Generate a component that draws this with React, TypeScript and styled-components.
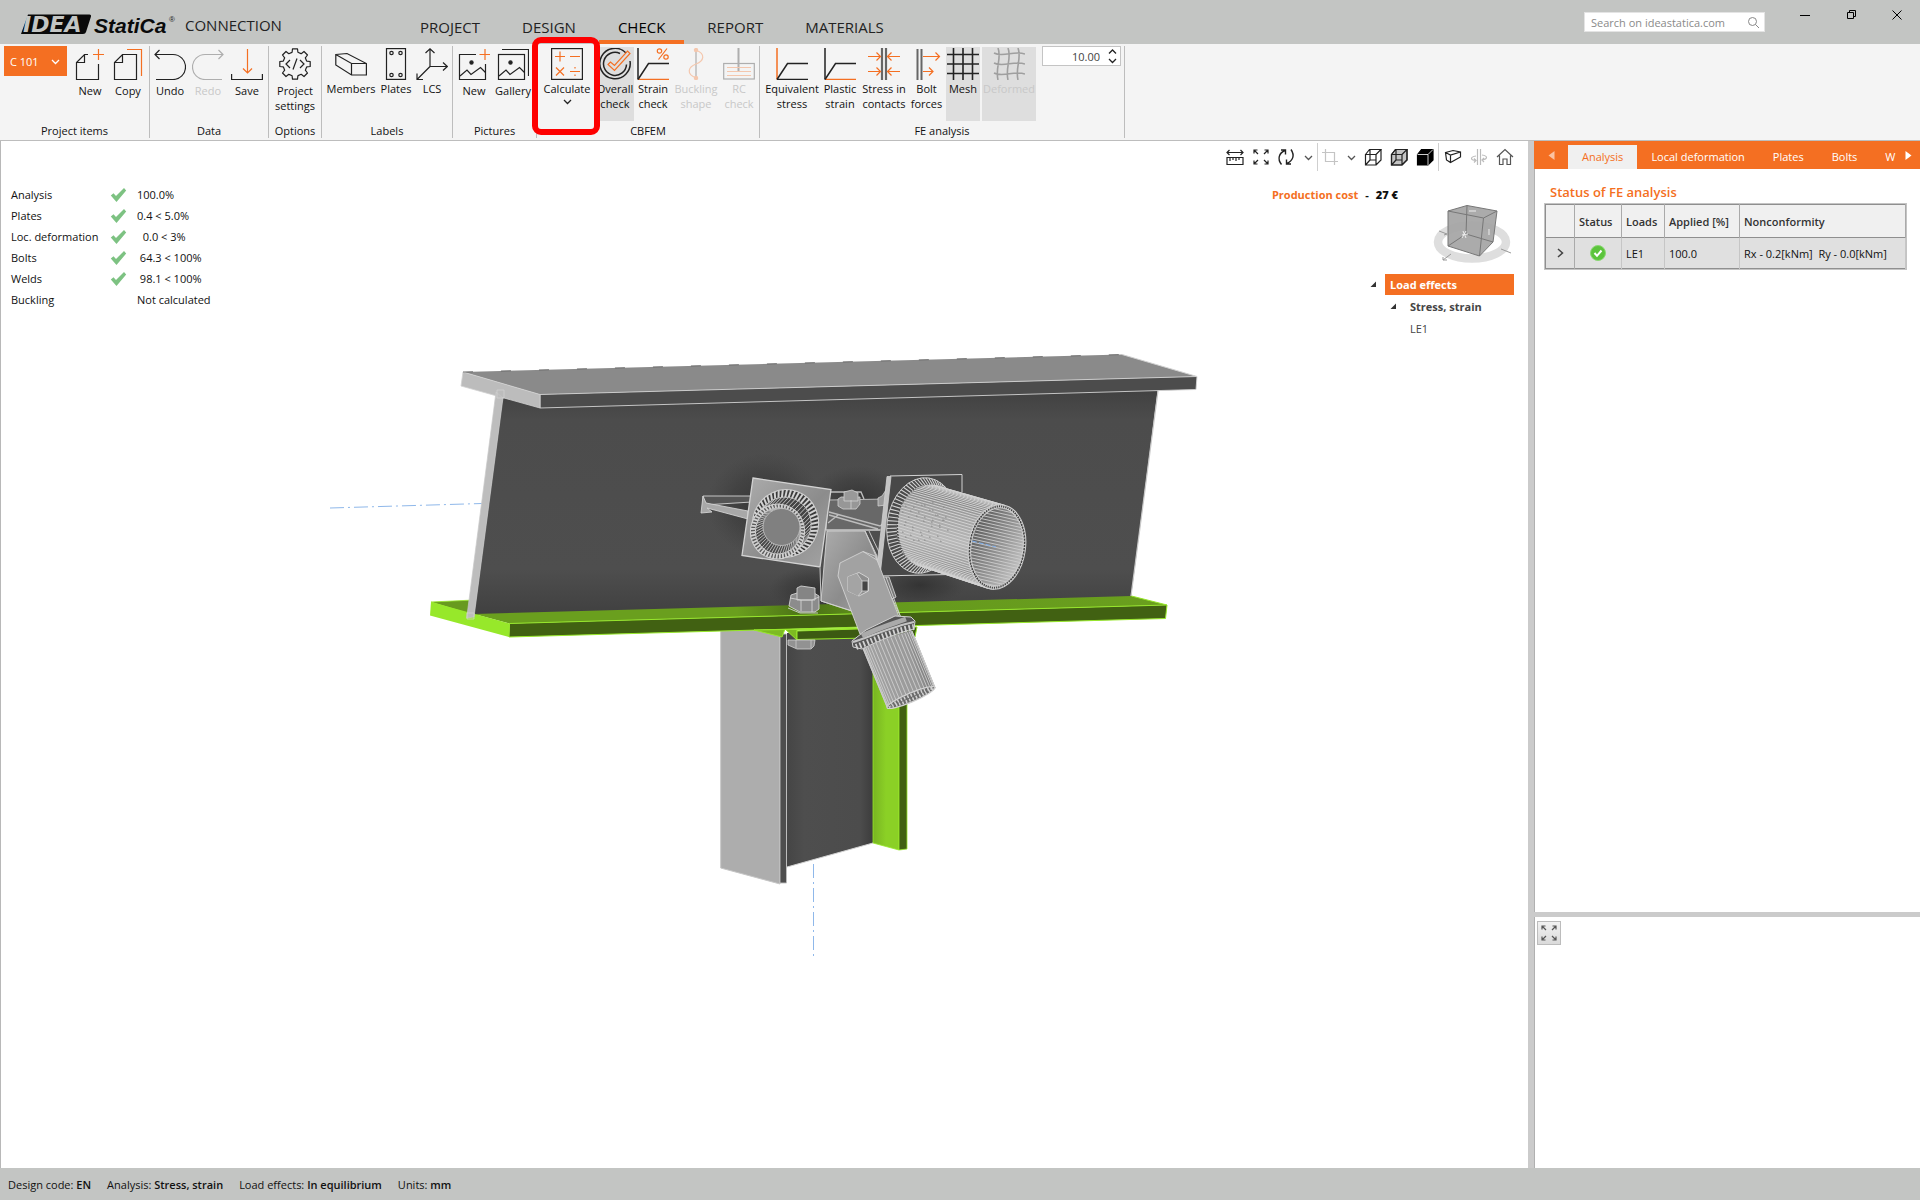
import React from "react";
import styled, { createGlobalStyle, css } from "styled-components";

const ORANGE = "#f46f22";
const INK = "#222";

const GlobalStyle = createGlobalStyle`
  * { box-sizing: border-box; }
  body { margin: 0; background: #fff; }
  button, input, select { font: inherit; color: inherit; border: 0; background: none; padding: 0; margin: 0; }
  svg { display: block; flex: none; }
`;

/* ---------- shell ---------- */
const Shell = styled.div`
  display: grid;
  grid-template-rows: 44px 97px minmax(0, 1fr) 32px;
  height: 100vh;
  font: 11px/15px "Open Sans", "Noto Sans", sans-serif;
  color: #111;
`;

const TitleBar = styled.header`
  display: flex;
  align-items: stretch;
  background: #c3c5c3;
`;
const Brand = styled.div`
  display: flex;
  align-items: center;
  width: 401px;
  padding: 6px 0 0 20px;
  gap: 8px;
  font-size: 15px;
  color: #222;
`;
const Tabs = styled.nav`
  display: flex;
  gap: 4px;
`;
const Tab = styled.a<{ $active?: boolean }>`
  display: flex;
  align-items: center;
  padding: 16px 19px 2px;
  border-bottom: 4px solid ${(p) => (p.$active ? ORANGE : "transparent")};
  color: ${(p) => (p.$active ? "#000" : "#222")};
  font-size: 15px;
  text-decoration: none;
`;
const TitleTools = styled.div`
  display: flex;
  align-items: flex-start;
  margin-left: auto;
`;
const Search = styled.label`
  display: flex;
  align-items: center;
  width: 181px;
  height: 20px;
  margin: 12px 17px 0 0;
  padding: 0 4px 0 6px;
  background: #fff;
  border: 1px solid #e4e4e4;
  input { flex: 1; min-width: 0; outline: 0; }
  input::placeholder { color: #8a8a8a; opacity: 1; }
`;
const WindowButton = styled.button`
  display: flex;
  justify-content: center;
  width: 46px;
  padding-top: 9px;
`;

/* ---------- ribbon ---------- */
const Ribbon = styled.div`
  display: flex;
  background: #f4f4f4;
  border-bottom: 1px solid #bdbdbd;
`;
const GroupBox = styled.section<{ $width: number; $pad: number }>`
  position: relative;
  display: flex;
  flex-direction: column;
  width: ${(p) => p.$width}px;
  margin: 2px 0;
  padding-left: ${(p) => p.$pad}px;
  border-right: 1px solid #bdbdbd;
`;
const GroupTools = styled.div`
  display: flex;
  flex: 1;
  align-items: flex-start;
`;
const GroupTitle = styled.h2<{ $pad: number }>`
  margin: 0 0 0 -${(p) => p.$pad}px;
  font: inherit;
  text-align: center;
`;
const Tool = styled.button<{ $width: number; $on?: boolean; $low?: boolean; $gap?: number }>`
  display: flex;
  flex-direction: column;
  align-items: center;
  width: ${(p) => p.$width}px;
  height: 74px;
  margin: 1px ${(p) => p.$gap ?? 0}px 0 0;
  padding-top: 1px;
  gap: ${(p) => (p.$low ? 3 : 1)}px;
  white-space: pre;
  text-align: center;
  background: ${(p) => (p.$on ? "#dedede" : "transparent")};
  &:disabled { color: #c8c8c8; }
  &:disabled svg { opacity: 0.33; }
`;
const ItemPicker = styled.div`
  position: relative;
  width: 63px;
  margin-right: 5px;
  select {
    appearance: none;
    width: 63px;
    height: 30px;
    padding-left: 6px;
    background: ${ORANGE};
    color: #fff;
    border-radius: 0;
  }
  svg { position: absolute; right: 7px; top: 11px; pointer-events: none; }
`;
const Spinner = styled.div`
  display: flex;
  width: 79px;
  height: 20px;
  margin-left: 6px;
  background: #fff;
  border: 1px solid #c4c4c4;
  input { flex: 1; min-width: 0; text-align: right; color: #444; outline: 0; }
`;
const SpinButtons = styled.div`
  display: flex;
  flex-direction: column;
  width: 20px;
  button { display: flex; flex: 1; align-items: center; justify-content: center; padding-left: 4px; }
`;
const Highlight = styled.div`
  position: absolute;
  left: -5px;
  top: -9px;
  width: 68px;
  height: 98px;
  border: 6px solid #fe0000;
  border-radius: 9px;
  pointer-events: none;
  z-index: 2;
`;

/* ---------- work area ---------- */
const Work = styled.div`
  display: grid;
  grid-template-columns: minmax(0, 1fr) 386px;
  column-gap: 6px;
  min-height: 0;
  background: #cbcbcb;
`;
const Viewport = styled.main`
  display: grid;
  min-height: 0;
  background: #fff;
  border-left: 1px solid #b8b8b8;
  > * { grid-area: 1 / 1; min-height: 0; }
`;
const Scene = styled.svg`
  width: 100%;
  height: 100%;
`;
const Hud = styled.div`
  display: flex;
  align-items: flex-start;
  justify-content: space-between;
  z-index: 1;
`;
const Results = styled.dl`
  display: grid;
  grid-template-columns: 99px 27px auto;
  grid-auto-rows: 21px;
  align-items: center;
  margin: 43px 0 0 10px;
  dt, dd { margin: 0; white-space: pre; }
  dd { grid-column: 3; }
`;
const HudSide = styled.div`
  display: flex;
  flex-direction: column;
  align-items: flex-end;
  padding-right: 10px;
`;
const ViewTools = styled.div`
  display: flex;
  align-items: center;
  height: 32px;
`;
const ViewTool = styled.button<{ $width: number }>`
  display: flex;
  justify-content: center;
  width: ${(p) => p.$width}px;
`;
const Rule = styled.span`
  width: 1px;
  height: 28px;
  background: #cfcfcf;
`;
const Cost = styled.p`
  display: flex;
  gap: 7px;
  margin: 14px 120px 0 0;
  font-weight: 700;
  span { color: ${ORANGE}; }
`;
const CubeWrap = styled.div`
  margin: 2px 6px 9px 0;
`;
const Tree = styled.ul`
  width: 144px;
  margin: 0 4px 0 0;
  padding: 0;
  list-style: none;
`;
const TreeRow = styled.li<{ $level: number; $strong?: boolean; $selected?: boolean }>`
  display: flex;
  align-items: center;
  gap: 8px;
  height: 22px;
  padding-left: ${(p) => p.$level * 20}px;
  font-weight: ${(p) => (p.$strong ? 700 : 400)};
  color: #444;
  span {
    flex: 1;
    padding-left: 5px;
    line-height: 21px;
    ${(p) => p.$selected && css`background: ${ORANGE}; color: #fff;`}
  }
`;

/* ---------- side panels ---------- */
const Side = styled.aside`
  display: grid;
  grid-template-rows: minmax(0, 1fr) 251px;
  row-gap: 5px;
  min-height: 0;
`;
const Panel = styled.section`
  background: #fff;
  border-left: 1px solid #b0b0b0;
  min-height: 0;
`;
const PanelTabs = styled.div`
  display: flex;
  align-items: flex-end;
  height: 28px;
  margin-left: -1px;
  background: ${ORANGE};
  color: #fff;
`;
const PanelTab = styled.button<{ $active?: boolean; $last?: boolean }>`
  height: 24px;
  padding: 0 ${(p) => (p.$last ? 0 : 14)}px 2px 14px;
  white-space: nowrap;
  ${(p) => p.$active && css`background: #f0f0f0; color: ${ORANGE};`}
`;
const Pager = styled.button<{ $width: number; $end?: boolean }>`
  display: flex;
  align-items: center;
  justify-content: center;
  width: ${(p) => p.$width}px;
  height: 28px;
  margin-left: ${(p) => (p.$end ? "auto" : 0)};
`;
const PanelTitle = styled.h3`
  margin: 14px 0 3px 15px;
  font-size: 13px;
  line-height: 18px;
  font-weight: 600;
  color: ${ORANGE};
`;
const StatusTable = styled.table`
  width: 361px;
  margin-left: 10px;
  border-collapse: collapse;
  border: 1px solid #8f8f8f;
  outline: 1px solid #c4c4c4;
  white-space: pre;
  th, td { padding: 0 0 0 4px; text-align: left; border-right: 1px solid #aaa; }
  th { height: 33px; background: #f0f0f0; font-weight: 600; color: #333; }
  td { height: 31px; background: #e0e0e0; border-top: 1px solid #8f8f8f; }
  td + td { border-color: #8f8f8f #c6c6c6; }
  svg { margin: 0 auto; }
  td:nth-child(-n + 2) { padding: 0; }
`;
const ExpandButton = styled.button`
  display: flex;
  align-items: center;
  justify-content: center;
  width: 24px;
  height: 24px;
  margin: 4px 0 0 2px;
  background: linear-gradient(#f2f2f2, #dadada);
  border: 1px solid #bcbcbc;
`;
const StatusBar = styled.footer`
  display: flex;
  align-items: center;
  gap: 16px;
  padding: 0 8px;
  background: #c3c5c3;
  b { font-weight: 600; color: #111; }
`;

/* ---------- icons ---------- */
const Icon = ({ size = 32, children, sw = 1.2, color = INK }: { size?: number; sw?: number; color?: string; children: React.ReactNode }) => (
  <svg width={size} height={size} viewBox={`0 0 ${size} ${size}`} fill="none" stroke={color} strokeWidth={sw}>
    {children}
  </svg>
);
const Chevron = ({ color = INK, up = false }: { color?: string; up?: boolean }) => (
  <svg width="9" height="9" viewBox="0 0 9 9" fill="none" stroke={color} strokeWidth="1.3">
    <path d={up ? "M1 6.5 4.5 3 8 6.5" : "M1 3 4.5 6.5 8 3"} />
  </svg>
);
const O = { stroke: ORANGE };

const NewIcon = () => (
  <Icon><path d="M14 6.5H10.500L2.500 14.500V31.500H24.500V16M10.500 6.500V14.500H2.500" /><path {...O} d="M24.500 1v11M19 6.500h11" /></Icon>
);
const CopyIcon = () => (
  <Icon><path d="M10.500 6.500H24.500V31.500H2.500V14.500ZM10.500 6.500V14.500H2.500" /><path {...O} d="M15 1.500H29.500V28" /></Icon>
);
const UndoIcon = () => (
  <Icon><path d="M1 6.500H19a12.500 12.500 0 0 1 0 25H2M5.500 2 1 6.500 5.500 11" /></Icon>
);
const RedoIcon = () => (
  <Icon><path d="M31 6.500H13a12.500 12.500 0 0 0 0 25H30M26.500 2 31 6.500 26.500 11" /></Icon>
);
const SaveIcon = () => (
  <Icon><path d="M.600 26V31.500H31.400V26" /><path {...O} d="M16.500 1V25M12 20.500 16.500 25 21 20.500" /></Icon>
);
const gearPath = (() => {
  let d = "";
  for (let i = 0; i < 8; i++) {
    const base = (i * Math.PI) / 4 - Math.PI / 2;
    [[-0.24, 12], [-0.16, 15.4], [0.16, 15.4], [0.24, 12], [0.52, 12]].forEach(([a, r], k) => {
      d += `${i === 0 && k === 0 ? "M" : "L"}${(16 + r * Math.cos(base + a)).toFixed(1)} ${(16 + r * Math.sin(base + a)).toFixed(1)}`;
    });
  }
  return d + "Z";
})();
const GearIcon = () => (
  <Icon><path d={gearPath} strokeLinejoin="round" /><path d="M11 12 7 16l4 4M21 12l4 4-4 4M18 10.500 14 21.500" /></Icon>
);
const MembersIcon = () => (
  <Icon><path d="M.800 6.500 12 5.500 31.400 15.500V27H16.500L.800 17ZM.800 6.500 16.500 15.500H31.400M16.500 15.500V27" /></Icon>
);
const PlatesIcon = () => (
  <Icon>
    <rect x="6.500" y=".600" width="19" height="30.800" />
    {[[11.500, 5], [20.500, 5], [11.500, 27], [20.500, 27]].map(([x, y]) => <circle key={`${x}-${y}`} cx={x} cy={y} r="1.700" />)}
  </Icon>
);
const LcsIcon = () => (
  <Icon><path d="M14 1V18.500H31M14 18.500 1 31.500M9.500 5 14 .800 18.500 5M27 14.500 31.300 18.500 27 22.500M1 25.500V31.500H7" /></Icon>
);
const Landscape = () => (
  <><circle cx="13.500" cy="14.500" r="1.600" fill={INK} /><path d="M2 28 9 22l4 4.500L22.500 19.500 27.500 24.500" /></>
);
const PictureIcon = () => (
  <Icon><path d="M18 6.500H1.500V31.500H27.500V16" /><Landscape /><path {...O} d="M27 1v11M21.500 6.500h11" /></Icon>
);
const GalleryIcon = () => (
  <Icon><rect x="1.500" y="6.500" width="26" height="25" /><path d="M5 1.500H31.500V28" /><Landscape /></Icon>
);
const CalculateIcon = () => (
  <Icon><rect x=".600" y=".600" width="30.800" height="30.800" /><path {...O} d="M4 8.500h10M9 3.500v10M19 8.500h10M5 19.500l8 8M13 19.500l-8 8M19 23.500h10M24 19v1.600M24 26.500v1.600" /></Icon>
);
const OverallIcon = () => (
  <Icon>
    <path d="M27 5A15.200 15.200 0 1 0 31 13M21 5.500A11.500 11.500 0 1 0 27.500 16.500" strokeWidth="1.500" />
    <path {...O} d="M9 16.500 11.500 14 15.500 17.500 28.500 3 31 5.500 15.500 22.500Z" />
  </Icon>
);
const Axes = ({ left, bottom }: { left: string; bottom: string }) => (
  <><path stroke={left} strokeWidth="1.500" d="M1 0V31.500" /><path stroke={bottom} strokeWidth="1.500" d="M1 31.500H32" /><path d="M1 31.500 11.500 15.500H32" strokeWidth="1.500" /></>
);
const StrainIcon = () => (
  <Icon>
    <Axes left={INK} bottom={ORANGE} />
    <g {...O}><circle cx="22.500" cy="3" r="2.200" /><circle cx="29" cy="9" r="2.200" /><path d="M30 .500 21.500 11.500" /></g>
  </Icon>
);
const BucklingIcon = () => (
  <Icon>
    <path d="M16 2V30" /><path {...O} d="M16 2C26 6 24 13 16 16S6 26 16 30" />
    <circle cx="16" cy="2" r="1.600" fill={ORANGE} {...O} /><circle cx="16" cy="30" r="1.600" fill={ORANGE} {...O} />
  </Icon>
);
const RcIcon = () => (
  <Icon><rect x=".700" y="15.500" width="30.600" height="15.500" /><path d="M15.500 0V24" strokeWidth="2" /><path {...O} d="M4 19.500H28M4 23.500H28M4 27.500H28" /></Icon>
);
const ContactsIcon = () => (
  <Icon>
    <path d="M14 0V32M18 0V32" stroke="#666" strokeWidth="2.200" />
    <path {...O} d="M0 8.500H12.500M8.500 4.500l4 4-4 4M32 8.500H19.500M23.500 4.500l-4 4 4 4M0 23.500H12.500M8.500 19.500l4 4-4 4M32 23.500H19.500M23.500 19.500l-4 4 4 4" />
  </Icon>
);
const BoltForcesIcon = () => (
  <Icon>
    <path d="M6.500 1V32M10.500 1V32" stroke="#666" strokeWidth="2" />
    <path {...O} d="M12 8.500H28.500M24.500 4.500l4 4-4 4M12 23.500H22M18 19.500l4 4-4 4" />
  </Icon>
);
const MeshIcon = () => <Icon sw={1.6}><path d="M6.500 0V32M16 0V32M25.500 0V32M0 6.500H32M0 16H32M0 25.500H32" /></Icon>;
const DeformedIcon = () => (
  <Icon sw={1.6}><path d="M5 0C9 10 2 20 5 32M15 0c4 10-3 20 0 32M25 0c4 10-3 20 0 32M1 5c9 5 20-3 31 1M1 15c9 5 20-3 31 1M1 25c9 5 20-3 31 1" /></Icon>
);

const wireCube = "M1.500 6.500H12V17H1.500ZM1.500 6.500 5.500 1.500H17L12 6.500M17 1.500V12L12 17M6 1.500V12M6 12 1.500 17M6 12H12";
const solidCube = "M1.500 6.500 5.500 1.500H17V12L12 17H1.500Z";
const Arrows4 = () => (
  <path d="M6 6 2 2M2 5.500V2H5.500M12 6 16 2M12.500 2H16V5.500M6 12 2 16M2 12.500V16H5.500M12 12 16 16M12.500 16H16V12.500" />
);

const Check = () => (
  <svg width="17" height="16" viewBox="0 0 17 16"><path d="M.800 8.500 3.500 6.200 6 9 14 1 16.200 3.500 6.500 15Z" fill="#7dc282" /></svg>
);

const Tri = () => (
  <svg width="7" height="7" viewBox="0 0 7 7"><path d="M6 .500V6H.500Z" fill="#333" /></svg>
);

/* ---------- 3D scene ---------- */
type Oval = { cx: number; cy: number; rx: number; ry: number; rot: number };
const at = (o: Oval, a: number) => {
  const r = (o.rot * Math.PI) / 180;
  const x = o.rx * Math.cos(a);
  const y = o.ry * Math.sin(a);
  return [o.cx + x * Math.cos(r) - y * Math.sin(r), o.cy + x * Math.sin(r) + y * Math.cos(r)];
};
const spokes = (a: Oval, b: Oval, n: number) => {
  let d = "";
  for (let i = 0; i < n; i++) {
    const t = (i / n) * Math.PI * 2;
    const [x1, y1] = at(a, t);
    const [x2, y2] = at(b, t);
    d += `M${x1.toFixed(1)} ${y1.toFixed(1)}L${x2.toFixed(1)} ${y2.toFixed(1)}`;
  }
  return d;
};
const Ellipse = ({ o, ...rest }: { o: Oval } & React.SVGProps<SVGEllipseElement>) => (
  <ellipse cx={o.cx} cy={o.cy} rx={o.rx} ry={o.ry} transform={`rotate(${o.rot} ${o.cx} ${o.cy})`} {...rest} />
);

const WIRE = "#d2d2d2";
const LIME = "#97e82a";
const flareOut: Oval = { cx: 922, cy: 525.5, rx: 35, ry: 48, rot: 8 };
const flareIn: Oval = { cx: 927, cy: 525.5, rx: 30, ry: 41, rot: 8 };
const mouth: Oval = { cx: 997, cy: 547, rx: 28.5, ry: 42.5, rot: 8 };
const mouthIn: Oval = { cx: 997, cy: 547, rx: 26, ry: 39.5, rot: 8 };
const ringBack: Oval = { cx: 785.5, cy: 523.5, rx: 33, ry: 34, rot: 20 };
const ringBackIn: Oval = { cx: 784, cy: 525, rx: 27, ry: 28, rot: 20 };
const ringFront: Oval = { cx: 777.5, cy: 531.5, rx: 27, ry: 27.5, rot: 20 };
const ringHole: Oval = { cx: 778, cy: 531, rx: 22.5, ry: 23, rot: 20 };
const holeFloor: Oval = { cx: 781.5, cy: 527, rx: 18.5, ry: 18.5, rot: 20 };

const tubeBody = (() => {
  let d = "";
  const n = 46;
  for (let i = 0; i <= n; i++) {
    const t = Math.PI * (0.47 + (1.06 * i) / n);
    const [x1, y1] = at(flareIn, t);
    const [x2, y2] = at(mouth, t);
    d += `M${x1.toFixed(1)} ${y1.toFixed(1)}L${x2.toFixed(1)} ${y2.toFixed(1)}`;
  }
  return d;
})();
const tubeInterior = (() => {
  let d = "";
  for (let i = -16; i < 20; i++) d += `M955 ${(535 + i * 3.2).toFixed(1)}L1030 ${(552 + i * 3.2).toFixed(1)}`;
  return d;
})();
const lowerTube = (() => {
  let d = "";
  for (let i = 0; i <= 20; i++) {
    const t = (1 - Math.cos((i / 20) * Math.PI)) / 2;
    const bulge = Math.sin((i / 20) * Math.PI) * 5;
    d += `M${(862 + 50 * t).toFixed(1)} ${(646 - 15 * t).toFixed(1)}L${(887 + 48 * t + bulge * 0.3).toFixed(1)} ${(707 - 19.5 * t + bulge * 0.5).toFixed(1)}`;
  }
  return d;
})();
const specks = (() => {
  let d = "";
  for (let i = 0; i < 44; i++) {
    const x = 902 + ((i * 29 + (i * i) % 7) % 46);
    const y = 502 + ((i * 17 + (i * i) % 5) % 40);
    d += `M${x} ${y}l1.500 .400`;
  }
  return d;
})();

const Model = () => (
  <Scene viewBox="1 141 1527 1027" preserveAspectRatio="xMidYMid meet" role="img" aria-label="Steel connection model">
    <defs>
      <linearGradient id="web" x1="0" y1="0" x2="0" y2="1">
        <stop offset="0" stopColor="#404040" /><stop offset=".14" stopColor="#4c4c4c" /><stop offset=".8" stopColor="#4e4e4e" /><stop offset="1" stopColor="#404040" />
      </linearGradient>
      <radialGradient id="shade"><stop offset="0" stopColor="#2a2a2a" stopOpacity=".7" /><stop offset=".6" stopColor="#303030" stopOpacity=".35" /><stop offset="1" stopColor="#383838" stopOpacity="0" /></radialGradient>
      <linearGradient id="colWeb" x1="0" y1="0" x2="1" y2="0">
        <stop offset="0" stopColor="#454545" /><stop offset=".2" stopColor="#4e4e4e" /><stop offset=".85" stopColor="#4c4c4c" /><stop offset="1" stopColor="#3c3c3c" />
      </linearGradient>
      <linearGradient id="colGreen" x1="0" y1="0" x2="1" y2="0"><stop offset="0" stopColor="#78b422" /><stop offset=".5" stopColor="#8bd026" /></linearGradient>
      <linearGradient id="plate" x1="0" y1="0" x2="1" y2="1"><stop offset="0" stopColor="#adadad" /><stop offset=".55" stopColor="#8c8c8c" /><stop offset="1" stopColor="#a4a4a4" /></linearGradient>
      <linearGradient id="tube" x1=".4" y1="0" x2=".2" y2="1"><stop offset="0" stopColor="#6a6a6a" /><stop offset=".25" stopColor="#a2a2a2" /><stop offset=".5" stopColor="#b8b8b8" /><stop offset=".7" stopColor="#9c9c9c" /><stop offset="1" stopColor="#505050" /></linearGradient>
      <linearGradient id="bore" x1="0" y1="0" x2="1" y2=".6"><stop offset="0" stopColor="#4c4c4c" /><stop offset=".5" stopColor="#858585" /><stop offset="1" stopColor="#bcbcbc" /></linearGradient>
      <linearGradient id="lower" x1="0" y1=".3" x2="1" y2="0"><stop offset="0" stopColor="#a2a2a2" /><stop offset=".6" stopColor="#999" /><stop offset="1" stopColor="#484848" /></linearGradient>
      <linearGradient id="green" x1="0" y1="0" x2="1" y2="0"><stop offset="0" stopColor="#6a9f1e" /><stop offset=".38" stopColor="#6a9f1e" /><stop offset=".48" stopColor="#4a7015" /><stop offset=".58" stopColor="#65991d" /><stop offset="1" stopColor="#6a9f1e" /></linearGradient>
      <clipPath id="mouthClip"><Ellipse o={mouthIn} /></clipPath>
    </defs>

    {/* system lines */}
    <path d="M330 508 482 503.500M813.500 864V957" stroke="#8fb8ea" strokeDasharray="14 4 2 4" />

    {/* column */}
    <path d="M787 633H873V843L787 867Z" fill="url(#colWeb)" />
    <path d="M873 633H899V850L873 843Z" fill="url(#colGreen)" stroke={LIME} strokeWidth=".800" />
    <path d="M899 633H907V849L899 850Z" fill="#416112" stroke={LIME} strokeWidth=".800" />
    <path d="M720.700 630H780V884L720.700 868Z" fill="#adadad" stroke="#c6c6c6" />
    <path d="M780 634H786.500V883H780Z" fill="#4e4e4e" stroke="#c0c0c0" strokeWidth=".900" />
    <path d="M787 867 873 843" stroke={WIRE} />

    {/* beam web */}
    <path d="M503 396 1158 388 1131 597 474 615Z" fill="url(#web)" />
    <path d="M1158 391 1131 596" stroke="#c8c8c8" strokeWidth="1.200" />
    <ellipse cx="765" cy="505" rx="58" ry="52" fill="url(#shade)" />
    <ellipse cx="858" cy="500" rx="50" ry="34" fill="url(#shade)" />
    <ellipse cx="815" cy="590" rx="46" ry="24" fill="url(#shade)" />
    <ellipse cx="920" cy="585" rx="46" ry="20" fill="url(#shade)" />

    {/* top flange */}
    <path d="M463 372 1122 354.500 1197 376.500 540 394.500Z" fill="#8a8a8a" />
    <path d="M540 394.500 1197 376.500 1196 389.500 540 408Z" fill="#4c4c4c" stroke={WIRE} strokeWidth=".900" />
    <path d="M463 372 540 394.500V408L461 386Z" fill="#bcbcbc" stroke="#d2d2d2" strokeWidth=".800" />
    <path d="M1122 354.500 1197 376.500" stroke={WIRE} />
    <path d="M463 372 1122 354.500" stroke="#5c5c5c" strokeWidth=".800" strokeDasharray="10 28" />

    {/* bottom flange */}
    <path d="M431 602 474 600 470 614Z" fill="#689a1f" stroke={LIME} strokeWidth=".800" />
    <path d="M474 614 1131.500 596 1167 605 509.500 623.500Z" fill="url(#green)" />
    <path d="M1131.500 596 1167 605" stroke={LIME} />
    <path d="M509.500 623.500 1167 605 1165.500 618.500 509 637Z" fill="#416112" stroke={LIME} />
    <path d="M431 602 509.500 623.500 509 637 430 615.500Z" fill={LIME} />

    {/* beam web end */}
    <path d="M496 392 503 398 474 617 466.700 618Z" fill="#bdbdbd" stroke="#c9c9c9" strokeWidth=".700" />
    <path d="M497 390h7v8h-7ZM467 613h7v6h-7Z" fill="none" stroke="#d4d4d4" strokeWidth=".700" />

    {/* end plate and bolt below flange */}
    <path d="M754 630 782 637 785 629 797 640V630L860 628.500Z" fill="#7dbb22" stroke={LIME} />
    <path d="M797 631 917 627 915 637 797 639.500Z" fill="#3c5a12" stroke={LIME} />
    <path d="M788 640 815 640 814 646 811 649H797L788 645Z" fill="#929292" stroke={WIRE} strokeWidth=".800" />
    <path d="M796 640V648M811 640V648" stroke={WIRE} strokeWidth=".700" />

    {/* gusset to the left, bars between the plates */}
    <path d="M703 496H752V502L703 505Z" fill="#555" stroke={WIRE} strokeWidth=".900" />
    <path d="M703 496 701 513 712 512 707 508 748 519V511L706 503Z" fill="#a8a8a8" stroke={WIRE} strokeWidth=".900" />
    <path d="M828 500 888 499 882 530H826Z" fill="#686868" stroke={WIRE} strokeWidth=".800" />
    <path d="M831 492H861L864 499M829 512 880 526 888 520M829 515 878 529M826 530H880M828 523 838 515" fill="none" stroke="#bdbdbd" strokeWidth="1.400" />
    <path d="M838 499 841 497H860V504L856 509H843L838 506Z" fill="#979797" stroke={WIRE} strokeWidth=".800" />
    <path d="M844 492 852 490 858 493V501H844ZM851 500V509" fill="#999" stroke={WIRE} strokeWidth=".800" />
    <path d="M878 498 882 496 886 490V505L878 506Z" fill="#999" stroke={WIRE} strokeWidth=".800" />

    {/* vertical stiffener */}
    <path d="M827 531H865L877 556V580L870 617 821 601Z" fill="url(#plate)" stroke={WIRE} strokeWidth=".900" />
    <path d="M865 531 880 565M869 531 879 552M820 568 821 601 852 611" fill="none" stroke={WIRE} strokeWidth=".900" />
    <path d="M880 577 889 577 896 597 892 599ZM892 598 901 618" fill="#777" stroke={WIRE} strokeWidth=".900" />

    {/* left plate with tube seen end on */}
    <path d="M753 478 831 489.500 820 567 742 555.500Z" fill="url(#plate)" stroke={WIRE} strokeWidth="1.300" />
    <Ellipse o={ringBack} fill="#3a3a3a" stroke={WIRE} />
    <path d={spokes(ringBack, ringBackIn, 50)} stroke={WIRE} strokeWidth="2" />
    <Ellipse o={ringBackIn} fill="#444" stroke={WIRE} strokeWidth=".800" />
    <path d={spokes(ringBackIn, ringFront, 50)} stroke="#c4c4c4" strokeWidth="1" />
    <Ellipse o={ringFront} fill="#5a5a5a" stroke={WIRE} strokeWidth="1" />
    <path d={spokes(ringFront, ringHole, 50)} stroke={WIRE} strokeWidth="1.800" />
    <Ellipse o={ringHole} fill="#4a4a4a" stroke={WIRE} strokeWidth="1" />
    <path d={spokes(ringHole, holeFloor, 50)} stroke="#b8b8b8" strokeWidth="1" />
    <Ellipse o={holeFloor} fill="#808080" stroke="#c2c2c2" strokeWidth=".800" />

    {/* right plate with large tube */}
    <path d="M890 476 962 474.500V520L950 574.500 877 576Z" fill="#484848" />
    <path d="M962 492V474.500L890 476M877 576 950 574.500" fill="none" stroke={WIRE} />
    <path d="M887 476.500 891 476.500 880 576 876 575Z" fill="#c4c4c4" stroke={WIRE} strokeWidth=".800" />
    <Ellipse o={flareOut} fill="#4a4a4a" stroke={WIRE} strokeWidth=".900" />
    <path d={spokes(flareOut, flareIn, 76)} stroke={WIRE} strokeWidth="1.100" />
    <path d="M932 484.500 1003 504.500 991 589.500 921 566.500C906 562 898 546 898 525 898 503 912 483 932 484.500Z" fill="url(#tube)" />
    <path d={tubeBody} stroke={WIRE} strokeWidth="1" />
    <path d={specks} stroke="#8a8a8a" strokeWidth="1" />
    <Ellipse o={mouth} fill="#444" stroke={WIRE} />
    <path d={spokes(mouth, mouthIn, 80)} stroke={WIRE} strokeWidth="1" />
    <Ellipse o={mouthIn} fill="url(#bore)" stroke={WIRE} />
    <path d={tubeInterior} stroke="#cecece" strokeWidth=".900" clipPath="url(#mouthClip)" />
    <path d="M972 541 996 547" stroke="#7fb0ee" strokeDasharray="5 2" />

    {/* inclined connecting plate */}
    <path d="M840 563 863 551.500 877 560 899 617 860 634 838 576Z" fill="#a2a2a2" stroke={WIRE} strokeWidth=".900" />
    <path d="M863 551.500 875 556 877 560M886 577 901 618" fill="none" stroke={WIRE} strokeWidth=".900" />
    <path d="M847.500 577 859 572.500 868.500 578V591L859 596 848 591Z" fill="#8e8e8e" stroke={WIRE} strokeWidth="1" />
    <path d="M857 573.500 862 582V593L858 596 848 591 847.500 577Z" fill="#a4a4a4" />
    <path d="M862 581H868V591H862Z" fill="#454545" stroke={WIRE} strokeWidth=".800" />
    <path d="M857 573.500 862 581M862 591 858 596" stroke={WIRE} strokeWidth=".800" />

    {/* lower tube */}
    <path d="M861 645 912 630 935.500 688 887 708Z" fill="url(#lower)" />
    <path d={lowerTube} stroke="#cecece" strokeWidth=".900" />
    <path d="M852 641 866 630 895 616 911 617 915 621 914 629C900 632 880 640 862 649L853 647Z" fill="#555" stroke={WIRE} strokeWidth="1" />
    <path d="M853 642C865 639 890 627 914 622" fill="none" stroke="#c4c4c4" strokeWidth="2" />
    <path d="M856 647C872 641 890 632 914 627" fill="none" stroke={WIRE} strokeWidth="6" strokeDasharray="1.800 2.200" />
    <path d="M862 636C875 629 892 624 906 619" fill="none" stroke="#aaa" strokeWidth="5" />
    <g transform="rotate(-23 911 697.500)">
      <ellipse cx="911" cy="697.500" rx="26" ry="4.500" fill="#6a6a6a" stroke={WIRE} strokeWidth="1.300" />
      <ellipse cx="911" cy="697.500" rx="23" ry="2" fill="none" stroke={WIRE} strokeWidth="3" strokeDasharray="1.500 2" />
    </g>

    {/* bolt on flange */}
    <path d="M789 606 791 595 797 593H814L819 596V609L815 612 800 612Z" fill="#8c8c8c" stroke={WIRE} strokeWidth=".900" />
    <path d="M797 588 801 586 815 588V600H797Z" fill="#858585" stroke={WIRE} strokeWidth=".900" />
    <path d="M790 598 801 600 812 600 819 597M801 600V611M812 600V612M788 608 800 613H818" fill="none" stroke={WIRE} strokeWidth=".900" />
  </Scene>
);

const NavCube = () => (
  <svg width="80" height="60" viewBox="0 0 80 60" fill="none">
    <ellipse cx="40" cy="38" rx="34" ry="16.500" stroke="#dedede" strokeWidth="8.500" />
    <path d="M16 7 35 1.500 65 7 61 38 47.500 52 16 42Z" fill="#a4a4a4" fillOpacity=".92" stroke="#777" />
    <path d="M16 7 51.500 14 65 7M51.500 14 47.500 52M35 1.500 34 30 16 42M34 30 61 38" stroke="#777" />
    <path d="M37 7h7M57 25v6M31 27l3 7M34 27l-4 7M36 30l-6 1" stroke="#eee" />
    <path d="M7 27l8 3-3 1M69 45l10 4M19 50 11 56M11 53v3h4" stroke="#999" />
  </svg>
);

/* ---------- page ---------- */
type ToolSpec = { label: string; icon: React.ReactNode; width: number; on?: boolean; low?: boolean; gap?: number; disabled?: boolean };
type GroupSpec = { title: string; width: number; pad: number; tools: ToolSpec[] };

const groups: GroupSpec[] = [
  { title: "Project items", width: 150, pad: 4, tools: [
    { label: "New", icon: <NewIcon />, width: 36, low: true }, { label: "Copy", icon: <CopyIcon />, width: 40, low: true } ] },
  { title: "Data", width: 119, pad: 1, tools: [
    { label: "Undo", icon: <UndoIcon />, width: 38, low: true }, { label: "Redo", icon: <RedoIcon />, width: 38, low: true, disabled: true }, { label: "Save", icon: <SaveIcon />, width: 40, low: true } ] },
  { title: "Options", width: 53, pad: 0, tools: [{ label: "Project\nsettings", icon: <GearIcon />, width: 52, low: true }] },
  { title: "Labels", width: 131, pad: 3, tools: [
    { label: "Members", icon: <MembersIcon />, width: 52 }, { label: "Plates", icon: <PlatesIcon />, width: 38 }, { label: "LCS", icon: <LcsIcon />, width: 34 } ] },
  { title: "Pictures", width: 84, pad: 2, tools: [
    { label: "New", icon: <PictureIcon />, width: 38, low: true }, { label: "Gallery", icon: <GalleryIcon />, width: 40, low: true } ] },
  { title: "CBFEM", width: 223, pad: 1, tools: [
    { label: "Calculate", icon: <CalculateIcon />, width: 58 },
    { label: "Overall\ncheck", icon: <OverallIcon />, width: 38, on: true },
    { label: "Strain\ncheck", icon: <StrainIcon />, width: 38 },
    { label: "Buckling\nshape", icon: <BucklingIcon />, width: 48, disabled: true },
    { label: "RC\ncheck", icon: <RcIcon />, width: 38, disabled: true } ] },
  { title: "FE analysis", width: 365, pad: 3, tools: [
    { label: "Equivalent\nstress", icon: <Icon><Axes left={ORANGE} bottom={INK} /></Icon>, width: 58 },
    { label: "Plastic\nstrain", icon: <Icon><Axes left={INK} bottom={ORANGE} /></Icon>, width: 38 },
    { label: "Stress in\ncontacts", icon: <ContactsIcon />, width: 50 },
    { label: "Bolt\nforces", icon: <BoltForcesIcon />, width: 35, gap: 2 },
    { label: "Mesh", icon: <MeshIcon />, width: 34, on: true, gap: 2 },
    { label: "Deformed", icon: <DeformedIcon />, width: 54, on: true, disabled: true } ] },
];

const results: [string, string, boolean][] = [
  ["Analysis", "100.0%", true],
  ["Plates", "0.4 < 5.0%", true],
  ["Loc. deformation", "  0.0 < 3%", true],
  ["Bolts", " 64.3 < 100%", true],
  ["Welds", " 98.1 < 100%", true],
  ["Buckling", "Not calculated", false],
];

const RibbonGroup = ({ g }: { g: GroupSpec }) => (
  <GroupBox $width={g.width} $pad={g.pad}>
    <GroupTools>
      {g.title === "Project items" && (
        <ItemPicker>
          <select aria-label="Project item" defaultValue="C 101"><option>C 101</option></select>
          <Chevron color="#fff" />
        </ItemPicker>
      )}
      {g.tools.map((t) => (
        <Tool key={t.label} $width={t.width} $on={t.on} $low={t.low} $gap={t.gap} disabled={t.disabled}>
          {t.icon}
          <span>{t.label}</span>
          {t.label === "Calculate" && <Chevron />}
        </Tool>
      ))}
      {g.title === "FE analysis" && (
        <Spinner>
          <input aria-label="Deformation scale" defaultValue="10.00" />
          <SpinButtons>
            <button aria-label="Increase"><Chevron up /></button>
            <button aria-label="Decrease"><Chevron /></button>
          </SpinButtons>
        </Spinner>
      )}
    </GroupTools>
    <GroupTitle $pad={g.pad}>{g.title}</GroupTitle>
    {g.title === "CBFEM" && <Highlight />}
  </GroupBox>
);

export default function App() {
  return (
    <Shell>
      <GlobalStyle />
      <TitleBar>
        <Brand>
          <svg width="157" height="24" viewBox="0 0 157 24" role="img" aria-label="IDEA StatiCa">
            <path d="M8 1.500H69.500Q71.500 1.500 71 3.500L66 19Q65.500 21 63 21H1Z" fill="#0a0a0a" />
            <text x="3" y="19" fontFamily="DejaVu Sans" fontWeight="700" fontStyle="italic" fontSize="22" fill="#c3c5c3">IDEA</text>
            <text x="74" y="20" fontFamily="Liberation Sans" fontWeight="700" fontStyle="italic" fontSize="21" fill="#0a0a0a">StatiCa</text>
            <text x="149" y="9" fontFamily="Liberation Sans" fontSize="8" fill="#222">®</text>
          </svg>
          <span>CONNECTION</span>
        </Brand>
        <Tabs>
          {["PROJECT", "DESIGN", "CHECK", "REPORT", "MATERIALS"].map((t) => (
            <Tab key={t} href="#" $active={t === "CHECK"}>{t}</Tab>
          ))}
        </Tabs>
        <TitleTools>
          <Search>
            <input aria-label="Search" placeholder="Search on ideastatica.com" />
            <svg width="13" height="13" viewBox="0 0 13 13" fill="none" stroke="#888"><circle cx="5.500" cy="5.500" r="4" /><path d="M8.500 8.500 12 12" /></svg>
          </Search>
          <WindowButton aria-label="Minimize"><svg width="12" height="12" stroke="#000"><path d="M1 6.500h10" /></svg></WindowButton>
          <WindowButton aria-label="Restore"><svg width="12" height="12" fill="none" stroke="#000"><path d="M2.500 3.500h6v6h-6ZM4.500 3V1.500h6v6H9" /></svg></WindowButton>
          <WindowButton aria-label="Close"><svg width="12" height="12" stroke="#000"><path d="M1.500 1.500l9 9M10.500 1.500l-9 9" /></svg></WindowButton>
        </TitleTools>
      </TitleBar>

      <Ribbon>{groups.map((g) => <RibbonGroup key={g.title} g={g} />)}</Ribbon>

      <Work>
        <Viewport>
          <Model />
          <Hud>
            <Results>
              {results.map(([name, value, ok]) => (
                <React.Fragment key={name}>
                  <dt>{name}</dt>
                  {ok && <Check />}
                  <dd>{value}</dd>
                </React.Fragment>
              ))}
            </Results>
            <HudSide>
              <ViewTools>
                <ViewTool $width={26} aria-label="Measure"><Icon size={18}><path d="M1 4.500h16M3.500 2 1 4.500 3.500 7M14.500 2 17 4.500 14.500 7M1 9.500H17V16.500H1ZM4 10v3M7 10v2M10 10v3M13 10v2" /></Icon></ViewTool>
                <ViewTool $width={25} aria-label="Zoom to fit"><Icon size={18}><Arrows4 /></Icon></ViewTool>
                <ViewTool $width={26} aria-label="Rotate"><Icon size={18} sw={1.4}><path d="M4.500 16.500C0 11 2 5 8 2.500M4 2h4.500V6.500M14 1.500c4 6 2 11-4 14M14 16H9.500V11.500" /></Icon></ViewTool>
                <ViewTool $width={18} aria-label="Rotate options"><Chevron color="#555" /></ViewTool>
                <Rule />
                <ViewTool $width={24} aria-label="Crop"><Icon size={18}><path stroke="#c4c4c4" d="M4.500 1V13.500H17M1 4.500H13.500V17" /></Icon></ViewTool>
                <ViewTool $width={18} aria-label="Crop options"><Chevron color="#555" /></ViewTool>
                <ViewTool $width={26} aria-label="Wireframe"><Icon size={18}><path d={wireCube} /></Icon></ViewTool>
                <ViewTool $width={26} aria-label="Transparent"><Icon size={18}><path d={solidCube} fill="#c4c4c4" /><path d={wireCube} /></Icon></ViewTool>
                <ViewTool $width={26} aria-label="Solid"><Icon size={18}><path d={solidCube} fill="#000" stroke="#000" /><path d="M1.500 6.500H12V17M12 6.500 17 1.500" stroke="#fff" strokeWidth=".800" /></Icon></ViewTool>
                <Rule />
                <ViewTool $width={27} aria-label="Member view"><Icon size={18}><path d="M1.500 4.500 9 2.500 16.500 4V9L6.500 14.500 2.500 12ZM1.500 4.500 6.500 7 16.500 4M6.500 7V14.500" /></Icon></ViewTool>
                <ViewTool $width={26} aria-label="Section"><Icon size={18}><path stroke="#bbb" d="M7.500 1V17M10.500 1V17M6 8C0 9 0 12 6 12.500M4 10.500l2 2-2 2M12 7c6 1 6 4 0 5M14 10l-2 2 2 2" /></Icon></ViewTool>
                <ViewTool $width={26} aria-label="Home view"><Icon size={18}><path stroke="#555" d="M1 9 9 1.500 17 9M3.500 7.500V16.500H7V11H11V16.500H14.500V7.500" /></Icon></ViewTool>
              </ViewTools>
              <Cost><span>Production cost</span>- <b>27 €</b></Cost>
              <CubeWrap><NavCube /></CubeWrap>
              <Tree>
                <TreeRow $level={0} $strong $selected><Tri /><span>Load effects</span></TreeRow>
                <TreeRow $level={1} $strong><Tri /><span>Stress, strain</span></TreeRow>
                <TreeRow $level={1}><svg width="7" height="7" /><span>LE1</span></TreeRow>
              </Tree>
            </HudSide>
          </Hud>
        </Viewport>

        <Side>
          <Panel>
            <PanelTabs>
              <Pager $width={34} aria-label="Previous tabs"><svg width="7" height="9"><path d="M6.500 0V9L.500 4.500Z" fill="#fbc3a2" /></svg></Pager>
              <PanelTab $active>Analysis</PanelTab>
              <PanelTab>Local deformation</PanelTab>
              <PanelTab>Plates</PanelTab>
              <PanelTab>Bolts</PanelTab>
              <PanelTab $last>W</PanelTab>
              <Pager $width={26} $end aria-label="Next tabs"><svg width="7" height="9"><path d="M.500 0V9L6.500 4.500Z" fill="#fff" /></svg></Pager>
            </PanelTabs>
            <PanelTitle>Status of FE analysis</PanelTitle>
            <StatusTable>
              <colgroup><col width="29" /><col width="47" /><col width="43" /><col width="75" /><col /></colgroup>
              <thead><tr><th aria-label="Expand" /><th>Status</th><th>Loads</th><th>Applied [%]</th><th>Nonconformity</th></tr></thead>
              <tbody>
                <tr>
                  <td><svg width="7" height="10" fill="none" stroke="#444" strokeWidth="1.500"><path d="M1 1 5.500 5 1 9" /></svg></td>
                  <td><svg width="16" height="16"><circle cx="8" cy="8" r="7.500" fill="#5cc43c" stroke="#8ad873" /><path d="M4.500 8 7 10.800 11.500 5.500" fill="none" stroke="#fff" strokeWidth="2" /></svg></td>
                  <td>LE1</td><td>100.0</td><td>{"Rx - 0.2[kNm]  Ry - 0.0[kNm]"}</td>
                </tr>
              </tbody>
            </StatusTable>
          </Panel>
          <Panel>
            <ExpandButton aria-label="Fit drawing"><Icon size={18} color="#555"><Arrows4 /></Icon></ExpandButton>
          </Panel>
        </Side>
      </Work>

      <StatusBar>
        <span>Design code: <b>EN</b></span>
        <span>Analysis: <b>Stress, strain</b></span>
        <span>Load effects: <b>In equilibrium</b></span>
        <span>Units: <b>mm</b></span>
      </StatusBar>
    </Shell>
  );
}
